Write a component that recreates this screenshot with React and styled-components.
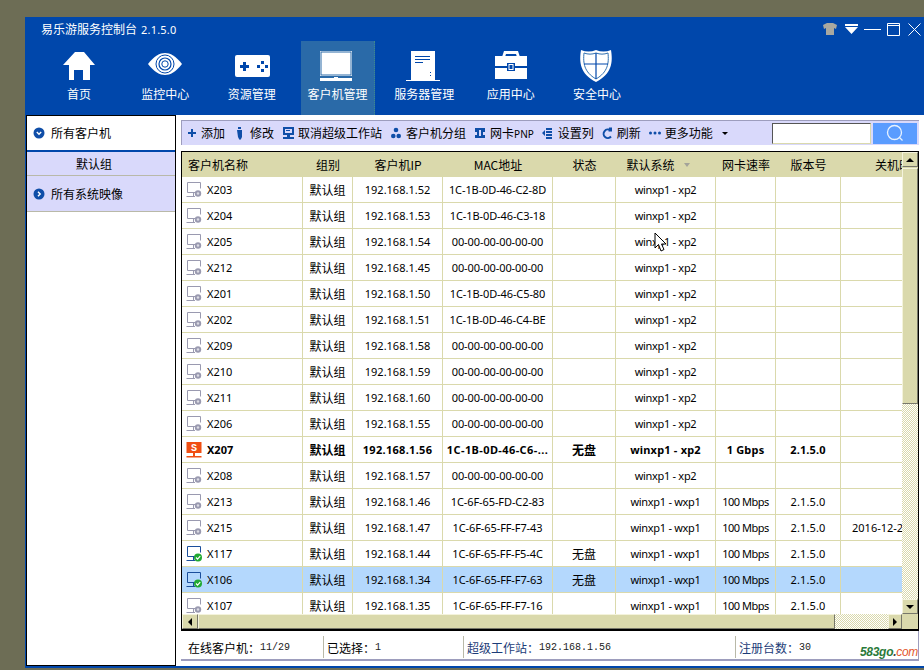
import React from 'react';
import styled, { createGlobalStyle, css } from 'styled-components';

const BLUE = '#0047ab';
const OLIVE = '#6d6d55';
const LAV = '#d9d9fb';
const KHAKI = '#dad9ac';
const SANS = '"Noto Sans", "Noto Sans CJK SC", sans-serif';
const CJK = '"Noto Sans CJK SC", "Noto Sans", sans-serif';
const COLS = '121px 50px 90px 110px 63px 100px 60px 65px 116px';

const Global = createGlobalStyle`
  html, body { margin: 0; padding: 0; background: ${OLIVE}; overflow: hidden; }
  * { box-sizing: border-box; }
`;

const Desktop = styled.div`
  width: 924px; height: 670px; padding: 17px 0 2px 25px;
  background: ${OLIVE}; font-family: ${CJK}; font-size: 12px; color: #000; position: relative; overflow: hidden;
`;
const Win = styled.div`
  width: 899px; height: 651px; display: flex; flex-direction: column; background: #fff;
  border-left: 1px solid ${BLUE}; border-bottom: 2px solid ${BLUE};
`;
const Header = styled.header`
  height: 98px; flex: none; margin-left: -1px; background: ${BLUE}; display: flex; flex-direction: column;
`;
const TitleBar = styled.div`
  height: 24px; flex: none; display: flex; align-items: center; justify-content: space-between;
  padding: 0 3px 0 16px; color: #fff;
`;
const Title = styled.span`
  font-size: 12px; line-height: 22px;
  & > b { font: 400 11px ${SANS}; letter-spacing: 0.2px; margin-left: 4px; }
`;
const Controls = styled.div`display: flex; align-items: center; gap: 6px;`;
const ControlIcon = styled.svg`display: block; flex: none; margin-right: ${p => p.$mr || 0}px;`;
const Nav = styled.nav`display: flex; gap: 12.33px; padding-left: 17px; height: 74px;`;
const NavItem = styled.div`
  width: 74px; height: 74px; padding-top: 9px; display: flex; flex-direction: column; align-items: center; color: #fff;
  ${p => p.$active && css`background: #2a6aa8; border-right: 1px dotted #3f8a8a;`}
`;
const NavIcon = styled.svg`width: 36px; height: 34px; flex: none; display: block;`;
const NavLabel = styled.span`line-height: 20px; font-size: 12px;`;

const Body = styled.div`flex: 1; display: flex; min-height: 0;`;
const Sidebar = styled.aside`
  width: 150px; flex: none; background: #fff; border: 1px solid #000; display: flex; flex-direction: column;
`;
const SideGroup = styled.div`
  height: ${p => p.$h}px; display: flex; align-items: center; gap: 6px; padding-left: ${p => p.$pad || 6}px;
  background: ${p => p.$lav ? LAV : '#fff'}; border-bottom: ${p => p.$line};
  line-height: 16px;
`;
const Main = styled.main`
  flex: 1; min-width: 0; padding: 5px 5px 5px 5px; display: flex; flex-direction: column; background: #fff;
`;
const Toolbar = styled.div`
  height: 25px; flex: none; background: ${LAV}; border-top: 1px solid #9d9dbd; border-left: 1px solid #9d9dbd;
  display: flex; align-items: center; padding-left: 6px; margin-bottom: 6px; position: relative;
`;
const Tool = styled.div`
  display: flex; align-items: center; gap: ${p => p.$gap ?? 5}px; margin-right: ${p => p.$mr ?? 10}px; line-height: 16px; white-space: nowrap;
`;
const SmallLatin = styled.span`font: 400 10px ${SANS};`;
const MenuCaret = styled.i`width: 0; height: 0; border: 3px solid transparent; border-top: 3px solid #000; border-bottom: 0;`;
const Search = styled.div`margin-left: auto; display: flex; gap: 2px; margin-right: 2px;`;
const SearchInput = styled.div`
  width: 99px; height: 21px; background: #fff;
  border: 1px solid #dad9ac; border-top: 1px solid #555; border-left: 1px solid #555;
`;
const SearchBtn = styled.div`
  width: 44px; height: 21px; background: #5a9cff; display: flex; align-items: center; justify-content: center;
`;

const TableBox = styled.div`
  height: 480px; flex: none; border: 1px solid #000; border-bottom-width: 2px;
  display: grid; grid-template-columns: 720px 16px; grid-template-rows: 462px 15px; background: #fff;
`;
const ListPane = styled.div`overflow: hidden; min-width: 0;`;
const RowBase = styled.div`display: grid; grid-template-columns: ${COLS}; width: 775px;`;
const HeadRow = styled(RowBase)`height: 25px; background: ${KHAKI};`;
const HeadCell = styled.div`
  display: flex; align-items: center; justify-content: ${p => p.$left ? 'flex-start' : 'center'};
  padding-left: ${p => p.$left ? 6 : 0}px; padding-right: ${p => p.$pr || 0}px; white-space: nowrap; overflow: hidden;
`;
const SortCaret = styled.i`
  width: 0; height: 0; margin-left: 9px; border: 3.5px solid transparent; border-top: 4px solid #a3a39a; border-bottom: 0;
`;
const Row = styled(RowBase)`
  height: 26px; background: ${p => p.$sel ? '#b4d8fd' : '#fff'}; border-bottom: 1px solid ${KHAKI};
  font-weight: ${p => p.$bold ? 700 : 400};
`;
const Cell = styled.div`
  display: flex; align-items: center; justify-content: center; white-space: nowrap; overflow: hidden;
  border-right: 1px solid ${KHAKI}; font-family: ${SANS}; font-size: 11px; line-height: 16px;
  letter-spacing: ${p => p.$ls || 0}px;
  ${p => p.$cjk && css`font-family: ${CJK}; font-size: 12px;`}
`;
const NameCell = styled(Cell)`justify-content: flex-start; padding-left: 4px; gap: 5px;`;
const DateCell = styled(Cell)`justify-content: flex-start; padding-left: 11px; border-right: 0;`;

const VBar = styled.div`display: flex; flex-direction: column; background: ${KHAKI};`;
const HBar = styled.div`display: flex; background: ${KHAKI};`;
const ScrollBtn = styled.div`
  flex: none; width: ${p => p.$w || 16}px; height: ${p => p.$h || 15}px; background: ${KHAKI};
  border: 1px solid; border-color: #f4f3dc #77776a #77776a #f4f3dc;
  display: flex; align-items: center; justify-content: center;
`;
const Thumb = styled.div`
  background: ${KHAKI}; border: 1px solid; border-color: #f4f3dc #77776a #77776a #f4f3dc; flex: none;
  ${p => p.$v ? css`height: 236px; margin-top: 1px;` : css`width: 637px;`}
`;
const Track = styled.div`
  flex: 1; background: repeating-conic-gradient(${KHAKI} 0 25%, #fff 0 50%) 0 0 / 2px 2px;
`;
const Corner = styled.div`background: ${KHAKI};`;
const Arrow = styled.i`
  width: 0; height: 0; border: 4px solid transparent;
  ${p => p.$dir === 'up' && css`border-top: 0; border-bottom: 4px solid #000;`}
  ${p => p.$dir === 'down' && css`border-bottom: 0; border-top: 4px solid #000;`}
  ${p => p.$dir === 'left' && css`border-left: 0; border-right: 4px solid #000;`}
  ${p => p.$dir === 'right' && css`border-right: 0; border-left: 4px solid #000;`}
`;

const Status = styled.footer`
  height: 30px; flex: none; display: flex; align-items: center; border-bottom: 2px solid #9d9dbd; border-right: 1px solid #9d9dbd;
  position: relative; margin-right: 0; padding-top: 4px;
`;
const StatusItem = styled.div`
  width: ${p => p.$w}px; height: 22px; display: flex; align-items: center; white-space: nowrap;
  padding-left: ${p => p.$first ? 7 : 3}px; color: ${p => p.$blue ? '#1c3c78' : '#000'};
  ${p => !p.$first && css`border-left: 1px solid #b9b9a8;`}
`;
const Mono = styled.span`font-family: "Liberation Mono", monospace; font-size: 10px; color: #222; letter-spacing: 0;`;
const Watermark = styled.div`
  position: absolute; right: 0; bottom: 0; font: italic 700 12px/14px "Liberation Sans", sans-serif; color: #2a7a3a; letter-spacing: -0.3px;
  & > span { color: #e2562c; font-style: italic; font-weight: 400; }
  & > em { color: #444; }
`;
const Cursor = styled.svg`position: absolute; left: 654px; top: 232px; width: 14px; height: 21px;`;

function Bullet({ dir }) {
  return (
    <svg width="12" height="12" viewBox="0 0 12 12">
      <circle cx="6" cy="6" r="5.5" fill="#0f4ea8" />
      {dir === 'down'
        ? <path d="M3.8 5 6 7.2 8.2 5" fill="none" stroke="#fff" strokeWidth="1.4" />
        : <path d="M5 3.8 7.2 6 5 8.2" fill="none" stroke="#fff" strokeWidth="1.4" />}
    </svg>
  );
}

function PcIcon({ kind }) {
  if (kind === 's') {
    return (
      <svg width="16" height="16" viewBox="0 0 16 16" style={{ flex: 'none' }}>
        <rect x="0.5" y="0" width="15" height="11" fill="#f04e12" />
        <rect x="7" y="11" width="2" height="3" fill="#f04e12" />
        <rect x="0.5" y="14" width="15" height="1.5" fill="#f04e12" />
        <text x="8" y="9" textAnchor="middle" fontSize="10" fontFamily="Liberation Mono" fill="#fff">S</text>
      </svg>
    );
  }
  const on = kind === 'on';
  const c = on ? '#1b4f9c' : '#9a9ab0';
  return (
    <svg width="16" height="16" viewBox="0 0 16 16" style={{ flex: 'none' }}>
      <path d="M10 10.5H1.5V.5h13v6" fill="none" stroke={c} />
      <path d="M7.5 11v3M.5 14.5H9" fill="none" stroke={c} />
      {on ? (
        <>
          <circle cx="12" cy="11.5" r="4" fill="#22aa33" />
          <path d="M10 11.5l1.6 1.6 2.6-3" fill="none" stroke="#fff" strokeWidth="1.2" />
        </>
      ) : (
        <>
          <circle cx="12" cy="11.5" r="3.2" fill="#9a9ab0" />
          <circle cx="12" cy="11.5" r="1.2" fill="#dcdce4" />
        </>
      )}
    </svg>
  );
}

const NAV = [
  ['首页', <path key="a" fill="#fff" d="M2 15 14 2h9l11 13h-5v15h-7V20h-9v10H8V15z" />],
  ['监控中心', <g key="a" transform="translate(1 0)">
    <path fill="#fff" d="M0 14C6 6 12 3 17 3s11 3 17 11c-6 8-12 11-17 11S6 22 0 14z" />
    <circle cx="17" cy="14" r="9" fill="none" stroke={BLUE} strokeWidth="1" />
    <circle cx="17" cy="14" r="6" fill="none" stroke={BLUE} strokeWidth="1.2" />
    <circle cx="17" cy="14" r="3.2" fill="none" stroke={BLUE} strokeWidth="1" />
  </g>],
  ['资源管理', <g key="a" transform="translate(1 0)">
    <rect x="0" y="5" width="35" height="22" rx="2" fill="#fff" />
    <path fill={BLUE} d="M8 12h3v3h3v3h-3v3H8v-3H5v-3h3z" />
    <path fill={BLUE} d="M26 11h3v3h-3zM26 19h3v3h-3zM22 15h3v3h-3zM30 15h3v3h-3z" />
  </g>],
  ['客户机管理', <g key="a" transform="translate(-1 0)">
    <rect x="2" y="1" width="32" height="25" fill="#fff" />
    <rect x="3" y="2" width="30" height="23" fill="none" stroke="#2a6aa8" />
    <path fill="#fff" d="M2 28h14v-1h4v1h14v3H2z" />
  </g>],
  ['服务器管理', <g key="a" transform="translate(-1 0)">
    <rect x="6" y="1" width="24" height="29" fill="#fff" />
    <rect x="1" y="30" width="34" height="1" fill="#fff" />
    <path fill={BLUE} d="M10 6h15v1H10zM10 9h15v1H10zM10 12h8v1h-8zM25 22h1v1h-1zM25 25h1v1h-1z" />
  </g>],
  ['应用中心', <g key="a">
    <path fill="#fff" d="M9 7 11 1h14l2 6h-3l-1-3H13l-1 3z" />
    <path fill="#fff" d="M2 6h32v10H22v-3h-8v3H2zM2 18h12v3h8v-3h12v11H2z" />
    <rect x="15.5" y="14" width="5" height="6" fill="#fff" />
    <rect x="16.5" y="15" width="3" height="4" fill={BLUE} />
  </g>],
  ['安全中心', <g key="a" transform="translate(-1 0)">
    <path fill="#fff" d="M18 0c5 2 10 2 15 0 2 12 1 24-15 32C2 24 1 12 3 0c5 2 10 2 15 0z" />
    <path fill="none" stroke="#2f6fb0" strokeWidth="1" d="M18 3c4 1.500 8 1.500 12 0 1 10 0 19-12 26C6 22 5 13 6 3c4 1.500 8 1.500 12 0z" />
    <path fill="none" stroke={BLUE} strokeWidth="1.2" d="M18 3v26M6 14h24" />
  </g>],
];

const T = { fill: '#0f4ea8' };
const tools = [
  { label: '添加', mr: 11, gap: 5, w: 8, svg: <path {...T} d="M3 0h2v3h3v2H5v3H3V5H0V3h3z" transform="translate(0 2)" /> },
  { label: '修改', mr: 9, gap: 7, w: 7, svg: <path {...T} d="M2 0h3v2H2zM1 3h5v7l-1 2-1 1-1-1-1-2z" /> },
  { label: '取消超级工作站', mr: 9, gap: 4, w: 11, svg: <path {...T} fillRule="evenodd" d="M0 0h11v8H7v2h4v2H0v-2h4V8H0zM2 2v4h7V2zM3 3h4v1H3z" /> },
  { label: '客户机分组', mr: 9, gap: 5, w: 10, svg: <g {...T}><circle cx="5" cy="3" r="2.3" /><circle cx="2.300" cy="9" r="2.300" /><circle cx="7.700" cy="9" r="2.300" /></g> },
  { label: <span>网卡<SmallLatin>PNP</SmallLatin></span>, key: 'pnp', mr: 8, gap: 5, w: 10, svg: <path {...T} fillRule="evenodd" d="M0 1h10v4H8v3h2v3H0V8h2V5H0zM4 3v6h2V3z" /> },
  { label: '设置列', mr: 8, gap: 6, w: 10, svg: <path {...T} d="M4 1h6v2H4zM4 4h6v2H4zM4 7h6v2H4zM4 10h6v2H4zM3 3v6L0 6z" /> },
  { label: '刷新', mr: 8, gap: 5, w: 10, svg: <g><path fill="none" stroke="#0f4ea8" strokeWidth="2" d="M8.500 3.500A4.200 4.200 0 1 0 9 9.500" /><path {...T} d="M7 .5h3v4H6.500z" /></g> },
  { label: '更多功能', mr: 9, gap: 4, w: 12, svg: <g {...T}><circle cx="1.500" cy="6" r="1.500" /><circle cx="6" cy="6" r="1.500" /><circle cx="10.500" cy="6" r="1.500" /></g> },
];

const ZERO = '00-00-00-00-00-00';
const X = 'winxp1 - xp2';
const W = 'winxp1 - wxp1';
const rows = [
  { n: 'X203', ip: 52, mac: '1C-1B-0D-46-C2-8D' },
  { n: 'X204', ip: 53, mac: '1C-1B-0D-46-C3-18' },
  { n: 'X205', ip: 54, mac: ZERO },
  { n: 'X212', ip: 45, mac: ZERO },
  { n: 'X201', ip: 50, mac: '1C-1B-0D-46-C5-80' },
  { n: 'X202', ip: 51, mac: '1C-1B-0D-46-C4-BE' },
  { n: 'X209', ip: 58, mac: ZERO },
  { n: 'X210', ip: 59, mac: ZERO },
  { n: 'X211', ip: 60, mac: ZERO },
  { n: 'X206', ip: 55, mac: ZERO },
  { n: 'X207', ip: 56, mac: '1C-1B-0D-46-C6-...', st: '无盘', speed: '1 Gbps', ver: '2.1.5.0', bold: true, kind: 's' },
  { n: 'X208', ip: 57, mac: ZERO },
  { n: 'X213', ip: 46, mac: '1C-6F-65-FD-C2-83', sys: W, speed: '100 Mbps', ver: '2.1.5.0' },
  { n: 'X215', ip: 47, mac: '1C-6F-65-FF-F7-43', sys: W, speed: '100 Mbps', ver: '2.1.5.0', date: '2016-12-2' },
  { n: 'X117', ip: 44, mac: '1C-6F-65-FF-F5-4C', st: '无盘', sys: W, speed: '100 Mbps', ver: '2.1.5.0', kind: 'on' },
  { n: 'X106', ip: 34, mac: '1C-6F-65-FF-F7-63', st: '无盘', sys: W, speed: '100 Mbps', ver: '2.1.5.0', kind: 'on', sel: true },
  { n: 'X107', ip: 35, mac: '1C-6F-65-FF-F7-16', sys: W, speed: '100 Mbps', ver: '2.1.5.0' },
];

export default function App() {
  return (
    <Desktop>
      <Global />
      <Win>
        <Header>
          <TitleBar>
            <Title>易乐游服务控制台<b>2.1.5.0</b></Title>
            <Controls>
              <ControlIcon $mr={2} width="14" height="12" viewBox="0 0 14 12"><path fill="#a8a8a0" d="M4 0h6l4 2-1 4-2-1v7H3V5L1 6 0 2z" /></ControlIcon>
              <ControlIcon width="13" height="10" viewBox="0 0 13 10"><path fill="#fff" d="M0 0h13v2H0zM0 3h13L6.500 10z" /></ControlIcon>
              <ControlIcon width="17" height="12" viewBox="0 0 17 12"><path fill="#fff" d="M0 6h17v1H0z" /></ControlIcon>
              <ControlIcon $mr={2} width="13" height="13" viewBox="0 0 13 13"><path fill="none" stroke="#fff" d="M.5 .5h12v12H.5zM.5 2.500h12" /></ControlIcon>
              <ControlIcon width="13" height="13" viewBox="0 0 13 13"><path fill="none" stroke="#fff" d="M.5 .5l12 12M12.500 .5l-12 12" /></ControlIcon>
            </Controls>
          </TitleBar>
          <Nav>
            {NAV.map(([label, icon], i) => (
              <NavItem key={label} $active={i === 3}>
                <NavIcon viewBox="0 0 36 34">{icon}</NavIcon>
                <NavLabel>{label}</NavLabel>
              </NavItem>
            ))}
          </Nav>
        </Header>
        <Body>
          <Sidebar>
            <SideGroup $h={36} $line={`2px solid ${BLUE}`}><Bullet dir="down" />所有客户机</SideGroup>
            <SideGroup $h={24} $lav $pad={49} $line="1px solid #b9b9a8">默认组</SideGroup>
            <SideGroup $h={36} $lav $line="1px solid #b9b9a8"><Bullet dir="right" />所有系统映像</SideGroup>
          </Sidebar>
          <Main>
            <Toolbar>
              {tools.map(t => (
                <Tool key={t.key || t.label} $mr={t.mr} $gap={t.gap}>
                  <svg width={t.w} height="13" viewBox={`0 0 ${t.w} 13`}>{t.svg}</svg>
                  {t.label}
                </Tool>
              ))}
              <MenuCaret />
              <Search>
                <SearchInput />
                <SearchBtn>
                  <svg width="18" height="18" viewBox="0 0 18 18"><circle cx="8.500" cy="8.500" r="7" fill="none" stroke="#e8f2ff" strokeWidth="1.300" /><path d="M13.500 13.500l3 3" stroke="#e8f2ff" strokeWidth="1.300" /></svg>
                </SearchBtn>
              </Search>
            </Toolbar>
            <TableBox>
              <ListPane>
                <HeadRow>
                  <HeadCell $left>客户机名称</HeadCell>
                  <HeadCell>组别</HeadCell>
                  <HeadCell>客户机IP</HeadCell>
                  <HeadCell>MAC地址</HeadCell>
                  <HeadCell>状态</HeadCell>
                  <HeadCell $pr={16}>默认系统<SortCaret /></HeadCell>
                  <HeadCell>网卡速率</HeadCell>
                  <HeadCell>版本号</HeadCell>
                  <HeadCell>关机时间</HeadCell>
                </HeadRow>
                {rows.map(r => (
                  <Row key={r.n} $sel={r.sel} $bold={r.bold}>
                    <NameCell><PcIcon kind={r.kind || 'off'} />{r.n}</NameCell>
                    <Cell $cjk>默认组</Cell>
                    <Cell $ls={r.bold ? 0.3 : 0}>192.168.1.{r.ip}</Cell>
                    <Cell $ls={r.bold ? 0.4 : -0.1}>{r.mac}</Cell>
                    <Cell $cjk>{r.st}</Cell>
                    <Cell $ls={r.bold ? 0.2 : -0.3}>{r.sys || X}</Cell>
                    <Cell $ls={r.bold ? 0.2 : -0.5}>{r.speed}</Cell>
                    <Cell $ls={0.15}>{r.ver}</Cell>
                    <DateCell>{r.date}</DateCell>
                  </Row>
                ))}
              </ListPane>
              <VBar>
                <ScrollBtn><Arrow $dir="up" /></ScrollBtn>
                <Thumb $v />
                <Track />
                <ScrollBtn><Arrow $dir="down" /></ScrollBtn>
              </VBar>
              <HBar>
                <ScrollBtn><Arrow $dir="left" /></ScrollBtn>
                <Thumb />
                <Track />
                <ScrollBtn $w={14}><Arrow $dir="right" /></ScrollBtn>
              </HBar>
              <Corner />
            </TableBox>
            <Status>
              <StatusItem $first $w={142}>在线客户机：<Mono>11/29</Mono></StatusItem>
              <StatusItem $w={140}>已选择：<Mono>1</Mono></StatusItem>
              <StatusItem $w={272} $blue>超级工作站：<Mono>192.168.1.56</Mono></StatusItem>
              <StatusItem $w={150} $blue>注册台数：<Mono>30</Mono></StatusItem>
              <Watermark>583go<em>.</em><span>com</span></Watermark>
            </Status>
          </Main>
        </Body>
      </Win>
      <Cursor viewBox="0 0 14 21">
        <path d="M1 1v15l3.500-3.500L7 19l3-1.500-2.500-5.500H12z" fill="#fff" stroke="#000" />
      </Cursor>
    </Desktop>
  );
}
